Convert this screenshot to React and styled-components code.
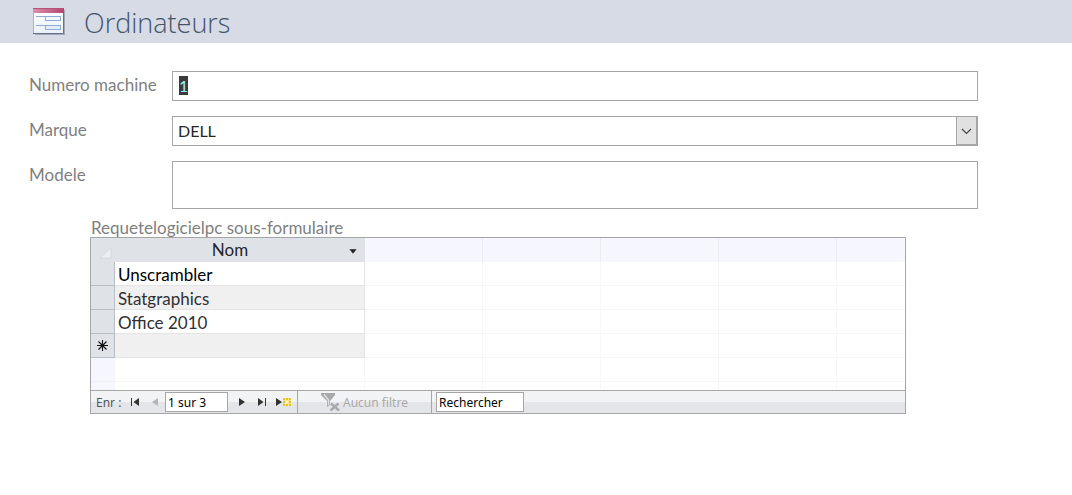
import React, { useEffect, useRef, useState } from 'react';
import styled, { createGlobalStyle } from 'styled-components';

const software = ['Unscrambler', 'Statgraphics', 'Office 2010'];
const emptyColumns = [1, 2, 3, 4, 5];

const App = () => {
  const [numero, setNumero] = useState('1');
  const [marque, setMarque] = useState('DELL');
  const [modele, setModele] = useState('');
  const [record, setRecord] = useState('1 sur 3');
  const [search, setSearch] = useState('Rechercher');
  const numeroRef = useRef(null);

  useEffect(() => {
    numeroRef.current.focus();
    numeroRef.current.select();
  }, []);

  return (
    <>
      <GlobalStyle />
      <Header>
        <FormIcon />
        <Title>Ordinateurs</Title>
      </Header>
      <Form>
        <Label htmlFor='numero'>Numero machine</Label>
        <Input
          id='numero'
          type='text'
          ref={numeroRef}
          value={numero}
          onChange={(e) => setNumero(e.target.value)}
        />
        <Label htmlFor='marque'>Marque</Label>
        <SelectBox>
          <Select id='marque' value={marque} onChange={(e) => setMarque(e.target.value)}>
            <option>DELL</option>
          </Select>
          <SelectArrow>
            <svg width='11' height='7' viewBox='0 0 11 7'>
              <path d='M1 1l4.5 4.5L10 1' fill='none' stroke='#444' strokeWidth='1.2' />
            </svg>
          </SelectArrow>
        </SelectBox>
        <Label htmlFor='modele'>Modele</Label>
        <TextArea id='modele' value={modele} onChange={(e) => setModele(e.target.value)} />
      </Form>
      <SubForm>
        <SubTitle id='sous-formulaire'>Requetelogicielpc sous-formulaire</SubTitle>
        <Frame>
          <Table aria-labelledby='sous-formulaire'>
            <colgroup>
              <Col $width={24} />
              <Col $width={250} />
              <Col $width={118} />
              <Col $width={118} />
              <Col $width={118} />
              <Col $width={118} />
              <col />
            </colgroup>
            <thead>
              <tr>
                <Corner>
                  <svg width='24' height='23' viewBox='0 0 24 23'>
                    <path d='M20 9v10h-11z' fill='#eceef1' stroke='#cdd1d6' strokeWidth='0.6' />
                  </svg>
                </Corner>
                <HeadCell>
                  <HeadContent>
                    <span>Nom</span>
                    <SortButton type='button' aria-label='Trier Nom'>
                      <svg width='8' height='5' viewBox='0 0 8 5'>
                        <path d='M0 0h8L4 5z' fill='#222' stroke='#fff' strokeWidth='0.4' />
                      </svg>
                    </SortButton>
                  </HeadContent>
                </HeadCell>
                {emptyColumns.map((c) => <EmptyHead key={c} />)}
              </tr>
            </thead>
            <tbody>
              {software.map((nom, i) => (
                <tr key={nom}>
                  <Selector />
                  <Cell $odd={i % 2 === 1} $current={i === 0}>{nom}</Cell>
                  {emptyColumns.map((c) => <EmptyCell key={c} />)}
                </tr>
              ))}
              <tr>
                <Selector>
                  <svg width='11' height='11' viewBox='0 0 11 11'>
                    <path d='M5.5 0v11M0 5.5h11M1.5 1.5l8 8M9.5 1.5l-8 8' stroke='#111' strokeWidth='1.1' />
                  </svg>
                </Selector>
                <Cell $odd />
                {emptyColumns.map((c) => <EmptyCell key={c} />)}
              </tr>
              <tr>
                <BlankSelector />
                <EmptyCell />
                {emptyColumns.map((c) => <EmptyCell key={c} />)}
              </tr>
              <ShortRow>
                <BlankSelector />
                <EmptyCell />
                {emptyColumns.map((c) => <EmptyCell key={c} />)}
              </ShortRow>
            </tbody>
          </Table>
          <NavBar>
            <NavGroup>
              <NavLabel htmlFor='enr'>Enr :</NavLabel>
              <NavButton type='button' aria-label='Premier'>
                <svg width='8' height='8' viewBox='0 0 8 8'>
                  <path d='M0 0h1v8H0zM8 0v8L2.5 4z' fill='#333' />
                </svg>
              </NavButton>
              <NavButton type='button' aria-label='Précédent' disabled>
                <svg width='6' height='8' viewBox='0 0 6 8'>
                  <path d='M6 0v8L0 4z' fill='#b5b5b8' />
                </svg>
              </NavButton>
              <RecordInput id='enr' value={record} onChange={(e) => setRecord(e.target.value)} />
              <NextButton type='button' aria-label='Suivant'>
                <svg width='6' height='8' viewBox='0 0 6 8'>
                  <path d='M0 0v8l6-4z' fill='#333' />
                </svg>
              </NextButton>
              <NavButton type='button' aria-label='Dernier'>
                <svg width='8' height='8' viewBox='0 0 8 8'>
                  <path d='M0 0v8l5.5-4zM7 0h1v8H7z' fill='#333' />
                </svg>
              </NavButton>
              <NewButton type='button' aria-label='Nouvel enregistrement'>
                <svg width='16' height='10' viewBox='0 0 16 10'>
                  <path d='M0 1v8l6-4z' fill='#333' />
                  <path d='M7 1h8v8H7z' fill='#f6e694' />
                  <path
                    d='M7 1h2v2H7zM10 1h2v2h-2zM13 1h2v2h-2zM7 4h2v2H7zM13 4h2v2h-2zM7 7h2v2H7zM10 7h2v2h-2zM13 7h2v2h-2z'
                    fill='#e3c42c'
                  />
                  <path d='M10 4h2v2h-2z' fill='#fdf8dc' />
                </svg>
              </NewButton>
            </NavGroup>
            <FilterButton type='button' disabled>
              <svg width='19' height='19' viewBox='0 0 19 19'>
                <path d='M0 0h14v2L9 8v4l-3 2V8L0 2z' fill='#a9a9a9' />
                <path d='M3 1.5L7.5 7v5' fill='none' stroke='#e2e2e2' strokeWidth='1.4' />
                <path d='M10 10.5l8 7M17.500 10.500l-8 7' stroke='#a9a9a9' strokeWidth='2.4' />
              </svg>
              Aucun filtre
            </FilterButton>
            <SearchInput
              type='text'
              aria-label='Rechercher'
              value={search}
              onChange={(e) => setSearch(e.target.value)}
            />
          </NavBar>
        </Frame>
      </SubForm>
    </>
  );
};

const FormIcon = () => (
  <svg width='34' height='29' viewBox='0 0 34 29'>
    <defs>
      <linearGradient id='page' x1='0' y1='0' x2='0' y2='1'>
        <stop offset='0' stopColor='#ffffff' />
        <stop offset='1' stopColor='#eaf1fa' />
      </linearGradient>
      <linearGradient id='bar' x1='0' y1='0' x2='1' y2='0'>
        <stop offset='0' stopColor='#dc8fab' />
        <stop offset='1' stopColor='#b3456d' />
      </linearGradient>
    </defs>
    <rect x='2' y='3' width='30' height='25' fill='#a3aab7' />
    <rect x='0.5' y='1.5' width='30' height='25' fill='url(#page)' stroke='#a9b4c6' />
    <path d='M0 26.5h30.5V5' fill='none' stroke='#66738a' />
    <rect x='0' y='1' width='31' height='5' fill='url(#bar)' />
    <path d='M0 1.5h31' stroke='#b8517a' />
    <path d='M3 9.500h9M3 18.500h9' stroke='#8fabd3' />
    <rect x='12.500' y='9.500' width='15' height='4' fill='#f2f7fd' stroke='#8fabd3' />
    <rect x='12.500' y='18.500' width='15' height='4' fill='#e3edf9' stroke='#8fabd3' />
  </svg>
);

const GlobalStyle = createGlobalStyle`
  * {
    box-sizing: border-box;
  }

  body {
    margin: 0;
    background: #ffffff;
    font-family: 'Lato', 'Open Sans', sans-serif;
    font-size: 17px;
    color: #262626;
  }

  input, select, textarea, button {
    font: inherit;
    color: inherit;
    border-radius: 0;
    outline: none;
  }

  ::selection {
    background: #3a3a3a;
    color: #9df3ff;
  }
`;

const Header = styled.header`
  display: flex;
  align-items: center;
  gap: 17px;
  height: 43px;
  padding-left: 33px;
  background: #d6dbe6;
`;

const Title = styled.h1`
  margin: 0;
  padding-top: 2px;
  font-family: 'Open Sans', sans-serif;
  font-weight: 300;
  font-size: 27px;
  color: #44546a;
`;

const Form = styled.form`
  display: grid;
  grid-template-columns: 143px 1fr;
  row-gap: 15px;
  padding: 28px 94px 0 29px;
`;

const Label = styled.label`
  padding-top: 3px;
  line-height: 22px;
  color: #7f7f7f;
`;

const Input = styled.input`
  width: 100%;
  height: 30px;
  padding: 0 6px 2px;
  border: 1px solid #a6a6a6;
  background: #ffffff;
  font-size: 16px;
`;

const SelectBox = styled.div`
  position: relative;
  height: 30px;
`;

const Select = styled.select`
  appearance: none;
  width: 100%;
  height: 30px;
  padding: 0 28px 2px 5px;
  border: 1px solid #a6a6a6;
  background: #ffffff;
  font-size: 16px;
`;

const SelectArrow = styled.span`
  position: absolute;
  top: 0;
  right: 0;
  display: flex;
  align-items: center;
  justify-content: center;
  width: 22px;
  height: 30px;
  padding-right: 2px;
  border: 1px solid #a6a6a6;
  box-shadow: inset -1px -1px #a6a6a6;
  background: #e1e1e1;
  pointer-events: none;
`;

const TextArea = styled.textarea`
  display: block;
  width: 100%;
  height: 48px;
  padding: 3px 6px;
  border: 1px solid #a6a6a6;
  resize: none;
  font-size: 16px;
`;

const SubForm = styled.section`
  padding: 8px 166px 0 90px;
`;

const SubTitle = styled.h2`
  margin: 0;
  padding: 2px 0 0 1px;
  font-weight: 400;
  font-size: 17px;
  line-height: 18px;
  color: #7f7f7f;
`;

const Frame = styled.div`
  border: 1px solid #a6a6a6;
`;

const Table = styled.table`
  width: 100%;
  table-layout: fixed;
  border-collapse: separate;
  border-spacing: 0;
`;

const Col = styled.col`
  width: ${({ $width }) => $width}px;
`;

const HeadCell = styled.th`
  height: 24px;
  padding: 0;
  font-weight: 400;
  line-height: 22px;
  background: #dfe2e7;
`;

const Corner = styled(HeadCell)`
  svg {
    display: block;
  }
`;

const HeadContent = styled.div`
  display: flex;
  align-items: center;

  span {
    flex: 1;
  }
`;

const SortButton = styled.button`
  display: flex;
  align-items: center;
  width: 20px;
  height: 22px;
  padding: 2px 0 0 4px;
  border: none;
  background: none;
`;

const EmptyHead = styled.td`
  height: 24px;
  padding: 0;
  border-right: 1px solid #eaebf3;
  background: #f6f7fe;

  &:last-child {
    border-right: none;
  }
`;

const Cell = styled.td`
  height: 24px;
  padding: 2px 3px 0;
  border-right: 1px solid #e4e4e4;
  border-bottom: 1px solid #e4e4e4;
  line-height: 21px;
  background: ${({ $odd }) => ($odd ? '#f0f0f0' : '#ffffff')};
  color: ${({ $current }) => ($current ? '#000000' : '#303030')};
`;

const Selector = styled.td`
  height: 24px;
  padding: 0;
  border-right: 1px solid #b9bdc4;
  border-bottom: 1px solid #b9bdc4;
  text-align: center;
  line-height: 0;
  background: #dfe2e7;

  svg {
    vertical-align: middle;
  }
`;

const EmptyCell = styled.td`
  height: 24px;
  padding: 0;
  border-right: 1px solid #f7f7f7;
  border-bottom: 1px solid #f7f7f7;

  &:last-child {
    border-right: none;
  }
`;

const BlankSelector = styled.td`
  height: 24px;
  padding: 0;
  border-bottom: 1px solid #f0f0f6;
  background: #f6f7fe;
`;

const ShortRow = styled.tr`
  td {
    height: 8px;
    border-bottom: none;
  }
`;

const NavBar = styled.div`
  display: flex;
  height: 23px;
  border-top: 1px solid #a6a6a6;
  background: linear-gradient(#f2f3f5 50%, #e4e5e9 50%);
  font-family: 'Noto Sans', sans-serif;
  font-size: 12px;
`;

const NavGroup = styled.div`
  display: flex;
  align-items: center;
  width: 207px;
  padding-left: 5px;
  border-right: 1px solid #a6a6a6;
`;

const NavLabel = styled.label`
  width: 29px;
  color: #555555;
`;

const NavButton = styled.button`
  display: flex;
  align-items: center;
  justify-content: center;
  width: 20px;
  height: 22px;
  padding: 0;
  border: none;
  background: none;
`;

const NextButton = styled(NavButton)`
  margin-left: 4px;
`;

const NewButton = styled(NavButton)`
  margin-left: 2px;
`;

const RecordInput = styled.input`
  width: 63px;
  height: 20px;
  padding: 0 2px;
  border: 1px solid #a6a6a6;
  background: #ffffff;
  color: #000000;
`;

const FilterButton = styled.button`
  display: flex;
  align-items: center;
  gap: 3px;
  width: 134px;
  padding: 0 0 0 23px;
  border: none;
  border-right: 1px solid #a6a6a6;
  background: none;
  color: #a9a9a9;
`;

const SearchInput = styled.input`
  width: 88px;
  height: 20px;
  margin: 1px 0 0 4px;
  padding: 0 2px;
  border: 1px solid #a6a6a6;
  background: #ffffff;
  color: #000000;
`;

export default App;
